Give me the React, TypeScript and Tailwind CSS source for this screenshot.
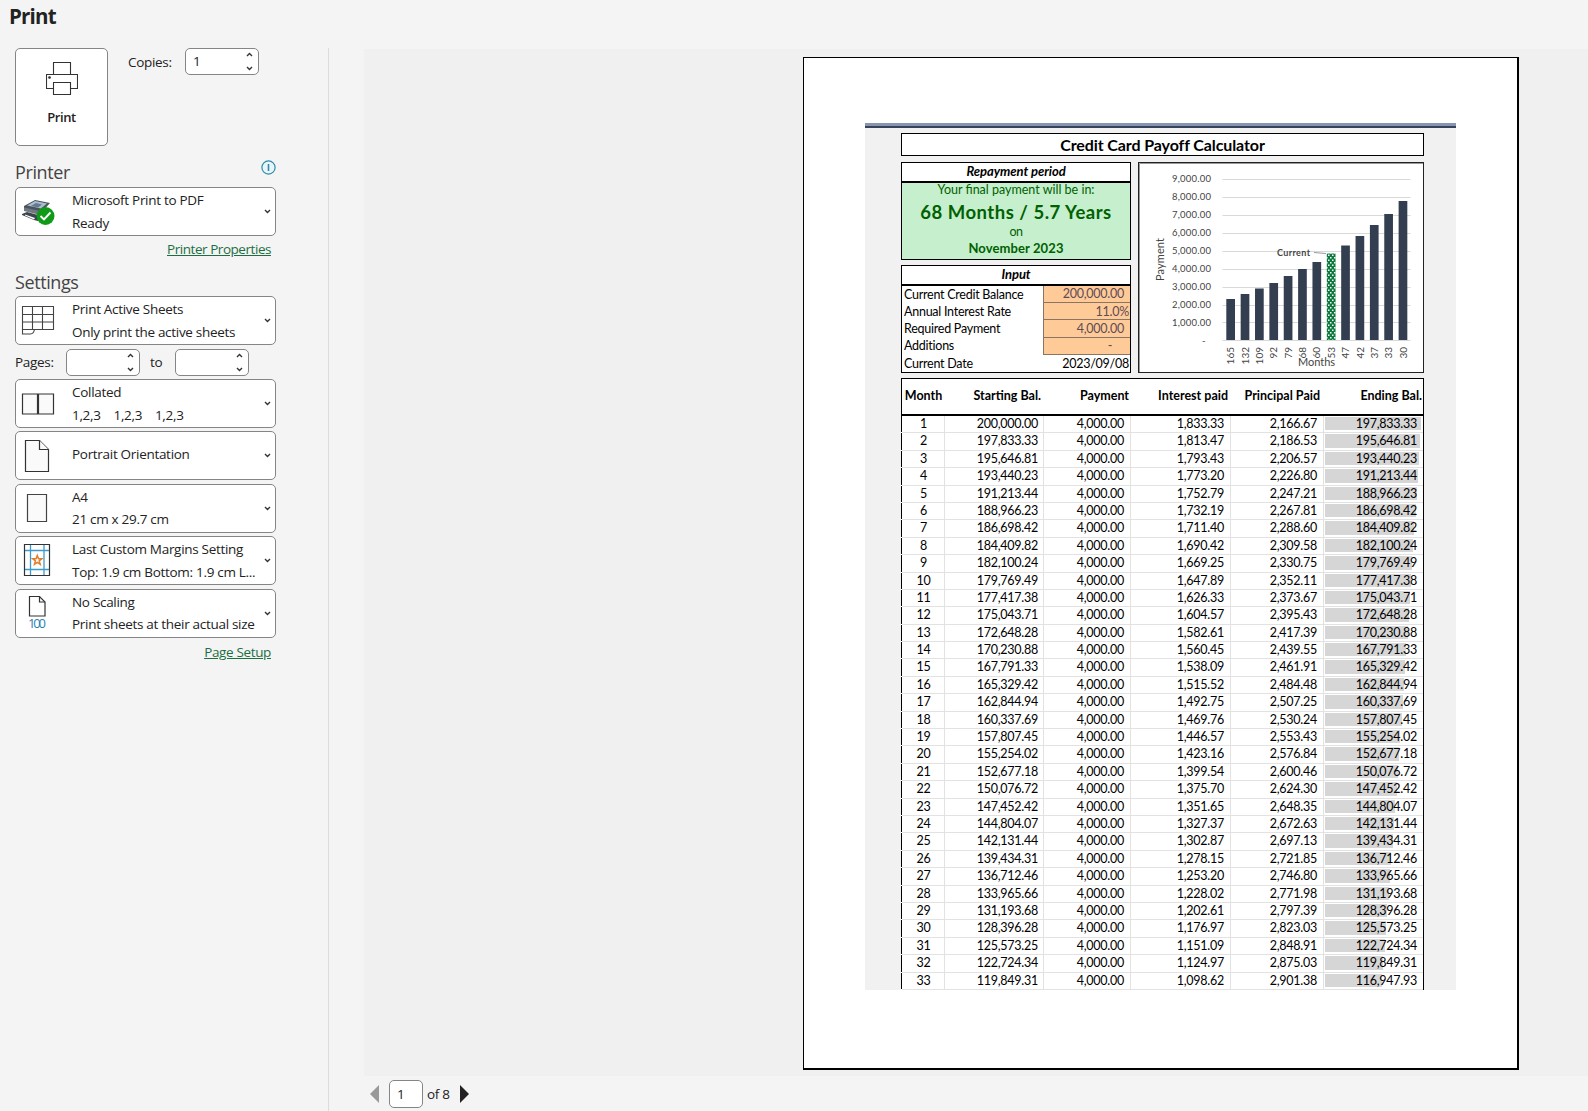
import type { ReactNode } from "react";

const PAYMENT = 4000;
const RATE = 0.11;

const money = (n: number) =>
  n.toLocaleString("en-US", { minimumFractionDigits: 2, maximumFractionDigits: 2 });

const buildSchedule = (balance: number, months: number) => {
  const rows = [];
  let start = balance;
  for (let month = 1; month <= months; month++) {
    const interest = (start * RATE) / 12;
    const principal = PAYMENT - interest;
    const end = start - principal;
    rows.push({ month, start, interest, principal, end });
    start = end;
  }
  return rows;
};

const schedule = buildSchedule(200000, 33);

const chartBars = [
  { months: "165", top: 137 },
  { months: "132", top: 132 },
  { months: "109", top: 126.5 },
  { months: "92", top: 121 },
  { months: "79", top: 114 },
  { months: "68", top: 107 },
  { months: "60", top: 100 },
  { months: "53", top: 91.5 },
  { months: "47", top: 83.5 },
  { months: "42", top: 74 },
  { months: "37", top: 63 },
  { months: "33", top: 52 },
  { months: "30", top: 39 },
];

const axisLabels = [
  "9,000.00", "8,000.00", "7,000.00", "6,000.00", "5,000.00",
  "4,000.00", "3,000.00", "2,000.00", "1,000.00",
];

function Chevron({ up = false }: { up?: boolean }) {
  return (
    <svg width="7" height="5" viewBox="0 0 7 5" fill="none" stroke="#333" strokeWidth="1.4">
      <path d={up ? "M1 4 3.5 1.5 6 4" : "M1 1 3.5 3.5 6 1"} />
    </svg>
  );
}

function NumberBox({ value = "" }: { value?: string }) {
  return (
    <div className="flex h-[27px] w-[74px] items-center justify-between rounded-[5px] border border-[#858585] bg-white pl-[7px] pr-[5px]">
      <span>{value}</span>
      <span className="flex flex-col gap-[9px]">
        <Chevron up />
        <Chevron />
      </span>
    </div>
  );
}

function Dropdown({ icon, title, detail }: { icon: ReactNode; title: string; detail?: string }) {
  return (
    <button
      type="button"
      className="flex h-[49px] w-[261px] shrink-0 items-center rounded-[5px] border border-[#858585] bg-white text-left"
    >
      <span className="flex w-[56px] shrink-0 pl-[4px]">{icon}</span>
      <span className={`flex w-[192px] shrink-0 flex-col whitespace-pre leading-[22.5px] ${detail ? "" : "pb-[3px]"}`}>
        <span>{title}</span>
        {detail && <span>{detail}</span>}
      </span>
      <Chevron />
    </button>
  );
}

function PrintIcon() {
  return (
    <svg width="32" height="33" viewBox="0 0 32 33" fill="#fff" stroke="#333" strokeWidth="1.1">
      <path d="M7.5 12.5V.5h17v12" />
      <path d="M7 26.500H.5v-14h31v14H25" />
      <path d="M7.500 20.500h17v12h-17z" />
      <circle cx="3.500" cy="15.500" r=".8" fill="#222" />
    </svg>
  );
}

function PrinterReadyIcon() {
  return (
    <svg width="36" height="30" viewBox="0 0 36 30">
      <path d="M4 9 15 3l15 3-9 10-17-4z" fill="#4b535e" />
      <path d="M7 8.500 15 4l12 2.500-6 5z" fill="#a9bdd0" />
      <path d="m11 9 5-3 6 1.500-4 3z" fill="#66788e" />
      <path d="M4 10.500 20 14v4L4 14z" fill="#6f7883" />
      <path d="m2 17 5-2 11 3v6l-4-1-12-5z" fill="#3d444c" />
      <path d="m5 17.500 10 3.500-1 1.500-9-4z" fill="#fff" />
      <circle cx="25.500" cy="19" r="9" fill="#119a18" />
      <path d="m20.500 19 3.500 3.500 6.500-7" fill="none" stroke="#fff" strokeWidth="1.900" />
    </svg>
  );
}

function SheetsIcon() {
  return (
    <svg width="36" height="32" viewBox="0 0 36 32" fill="none" stroke="#444" strokeWidth="1.1">
      <path d="M2.500 1.500h31v23h-31zM2.500 9.500h31M2.500 17h31M12.500 1.500v23M22.500 1.500v23" />
      <path d="M2.500 24.500v4.500h8q3 0 4-4.500" />
    </svg>
  );
}

function CollatedIcon() {
  return (
    <svg width="36" height="22" viewBox="0 0 36 22" fill="#fafafa" stroke="#333" strokeWidth="1.200">
      <path d="M2.500 1h15v20h-15zM18.500 1h15v20h-15z" />
    </svg>
  );
}

function PortraitIcon() {
  return (
    <svg width="36" height="34" viewBox="0 0 36 34" fill="#fafafa" stroke="#333" strokeWidth="1.200">
      <path d="M5.500 1.500h14l9 9v22h-23z" />
      <path d="M19.500 1.500v9h9" />
    </svg>
  );
}

function PaperIcon() {
  return (
    <svg width="36" height="30" viewBox="0 0 36 30" fill="#fafafa" stroke="#444" strokeWidth="1.200">
      <path d="M7.500 1.500h19v27h-19z" />
    </svg>
  );
}

function MarginsIcon() {
  return (
    <svg width="36" height="36" viewBox="0 0 36 36" fill="none" strokeWidth="1.200">
      <path d="M4.500 1.500h25v31h-25z" fill="#fff" stroke="#333" />
      <path d="M10.500 2v30M24 2v30M5 7.500h24M5 26.500h24" stroke="#3d9bcb" strokeWidth="1.300" />
      <path d="m17.300 12.500 1.200 3.200 3.400.1-2.700 2.100 1 3.300-2.900-1.900-2.800 1.900.9-3.300-2.700-2.100 3.400-.1z" stroke="#e0802c" strokeWidth="1.500" />
    </svg>
  );
}

function ScalingIcon() {
  return (
    <svg width="36" height="36" viewBox="0 0 36 36">
      <path d="M9.500 1.500h10l5.500 5.500v14h-15.500z" fill="#fff" stroke="#333" strokeWidth="1.200" />
      <path d="M19.500 1.500v5.500h5.500" fill="none" stroke="#333" strokeWidth="1.200" />
      <text x="8" y="32.500" textLength="18" fontSize="13" fill="#2e7fae" className="tracking-normal">100</text>
    </svg>
  );
}

function Sidebar() {
  return (
    <aside className="flex w-[329px] shrink-0 flex-col">
      <h1 className="h-[48px] pl-[9px] text-[20.500px] font-bold leading-[33px] tracking-[-0.800px] text-[#222]">Print</h1>
      <div className="flex flex-1 flex-col border-r border-[#dcdcdc] pl-[15px]">
        <div className="flex">
          <button type="button" className="flex h-[98px] w-[93px] flex-col items-center rounded-[5px] border border-[#858585] bg-white pt-[13px]">
            <PrintIcon />
            <span className="mt-[11px] text-[13px] font-semibold leading-[22px] tracking-[-0.400px]">Print</span>
          </button>
          <span className="ml-[20px] w-[57px] leading-[29px]">Copies:</span>
          <NumberBox value="1" />
        </div>

        <div className="mt-[14px] flex h-[27px] w-[261px] justify-between">
          <h2 className="text-[18px] leading-[24px] tracking-[-0.400px] text-[#444]">Printer</h2>
          <svg width="15" height="15" viewBox="0 0 15 15" fill="none" stroke="#2f8bab" strokeWidth="1.200">
            <circle cx="7.500" cy="7.500" r="6.600" fill="#eaf5f9" />
            <path d="M7.500 4v7" strokeWidth="1.600" />
          </svg>
        </div>
        <Dropdown icon={<PrinterReadyIcon />} title="Microsoft Print to PDF" detail="Ready" />
        <a className="mt-[2px] w-[256px] text-right leading-[22px] tracking-[-0.450px] text-[#1c6f43] underline">Printer Properties</a>

        <h2 className="mt-[9px] h-[27px] text-[18px] leading-[26px] tracking-[-0.400px] text-[#444]">Settings</h2>
        <Dropdown icon={<SheetsIcon />} title="Print Active Sheets" detail="Only print the active sheets" />
        <div className="my-[4px] flex h-[27px] items-center">
          <span className="w-[51px]">Pages:</span>
          <NumberBox />
          <span className="w-[35px] pl-[10px]">to</span>
          <NumberBox />
        </div>
        <div className="-mt-px flex flex-col gap-[3.400px]">
          <Dropdown icon={<CollatedIcon />} title="Collated" detail="1,2,3    1,2,3    1,2,3" />
          <Dropdown icon={<PortraitIcon />} title="Portrait Orientation" />
          <Dropdown icon={<PaperIcon />} title="A4" detail="21 cm x 29.7 cm" />
          <Dropdown icon={<MarginsIcon />} title="Last Custom Margins Setting" detail="Top: 1.9 cm Bottom: 1.9 cm L..." />
          <Dropdown icon={<ScalingIcon />} title="No Scaling" detail="Print sheets at their actual size" />
        </div>
        <a className="mt-[3px] w-[256px] text-right leading-[22px] tracking-[-0.350px] text-[#1c6f43] underline">Page Setup</a>
      </div>
    </aside>
  );
}

function PaymentChart() {
  return (
    <svg width="286" height="211" viewBox="0 0 286 211" fontSize="9.500" fill="#444" className="font-['Lato',sans-serif] tracking-normal">
      <defs>
        <pattern id="dots" width="4" height="5" patternUnits="userSpaceOnUse">
          <rect width="4" height="5" fill="#0b7a3c" />
          <rect x="0" y="0" width="1.500" height="1.500" fill="#fff" />
          <rect x="2" y="2.500" width="1.500" height="1.500" fill="#fff" />
        </pattern>
      </defs>
      <rect x=".5" y=".5" width="285" height="210" fill="#fff" stroke="#222" />
      <path d="M1.500 210V1.500H285" fill="none" stroke="#999" />
      {axisLabels.map((label, i) => (
        <g key={label}>
          <path d={`M84.500 ${Math.round(17 + i * 17.93)}.5h188`} stroke="#d9d9d9" />
          <text x="34" y={20.300 + i * 17.93} textLength="39">{label}</text>
        </g>
      ))}
      <path d="M84.500 178.500h188" stroke="#d9d9d9" />
      <text x="64" y="182">-</text>
      {chartBars.map((bar, i) => {
        const x = 88.300 + i * 14.360;
        return (
          <g key={bar.months}>
            <rect x={x} y={bar.top} width="8.700" height={178 - bar.top} fill={bar.months === "53" ? "url(#dots)" : "#333f50"} />
            <text transform={`translate(${x + 8} 185) rotate(-90)`} textAnchor="end" fontSize="10">{bar.months}</text>
          </g>
        );
      })}
      <path d="M176 90.500 188 91.500" stroke="#999" />
      <text x="139" y="94" textLength="33" fontSize="9" fontWeight="700">Current</text>
      <text transform="translate(26 119) rotate(-90)" textLength="43" fontSize="11">Payment</text>
      <text x="160" y="204" textLength="37" fontSize="11">Months</text>
    </svg>
  );
}

function BoxHeading({ children }: { children: ReactNode }) {
  return (
    <h3 className="h-[20px] shrink-0 border-b-2 border-black text-center text-[13px] font-bold italic leading-[17px] tracking-[-0.050px]">
      {children}
    </h3>
  );
}

function InputRow({ label, value, filled = true, flush = false }: { label: string; value: string; filled?: boolean; flush?: boolean }) {
  return (
    <div className="flex flex-1 items-center justify-between leading-[15.500px]">
      <span className="pl-[2px]">{label}</span>
      <span
        className={`flex h-full w-[87px] items-center justify-end whitespace-pre ${flush ? "pr-[1px]" : "pr-[6px]"} ${
          filled ? "border-b border-l border-[#8a7560] bg-[#fecb98] text-[#5f4a55]" : ""
        }`}
      >
        {value}
      </span>
    </div>
  );
}

const columns = "grid grid-cols-[43px_99px_87px_100px_93px_99px]";

function ScheduleTable() {
  return (
    <div className="mt-[5px] w-[523px]">
      <div className={`${columns} h-[38px] items-center whitespace-nowrap border border-b-2 border-black bg-white text-right font-bold tracking-normal`}>
        <span className="text-center">Month</span>
        <span className="pr-[3px]">Starting Bal.</span>
        <span className="pr-[2px]">Payment</span>
        <span className="pr-[3px]">Interest paid</span>
        <span className="pr-[4px]">Principal Paid</span>
        <span className="pr-[1px]">Ending Bal.</span>
      </div>
      <div className="flex h-[574px] flex-col border-r border-black bg-white">
        {schedule.map((row) => (
          <div key={row.month} className="flex flex-1">
            <div className="mb-px w-px bg-black" />
            <div className={`${columns} flex-1 border-b border-[#e2e2e2] text-right leading-[15px]`}>
              <span className="border-r border-[#e2e2e2] pl-px text-center">{row.month}</span>
              <span className="border-r border-[#e2e2e2] pr-[5px]">{money(row.start)}</span>
              <span className="border-r border-[#e2e2e2] pr-[6px]">{money(PAYMENT)}</span>
              <span className="border-r border-[#e2e2e2] pr-[6px]">{money(row.interest)}</span>
              <span className="border-r border-[#e2e2e2] pr-[6px]">{money(row.principal)}</span>
              <span className="relative pr-[6px]">
                <span
                  className="absolute bottom-[2px] left-[1px] top-[1px] bg-[#d6d6d6]"
                  style={{ width: (row.end / 197833.33) * 96 }}
                />
                <span className="relative">{money(row.end)}</span>
              </span>
            </div>
          </div>
        ))}
      </div>
    </div>
  );
}

function PrintedPage() {
  return (
    <div className="ml-[439px] mt-[8px] h-[1013px] w-[716px] border-b-2 border-l border-r-2 border-t border-black bg-white pl-[61px] pt-[65px] font-['Lato',sans-serif] text-[12.500px] tracking-[-0.250px] text-black">
      <div className="h-[867px] w-[591px] border-t-[3px] border-[#8496b0] bg-[#f1f1f1]">
        <div className="h-[2px] bg-[#38425a]" />
        <div className="pl-[36px] pt-[5px]">
          <h2 className="h-[23px] w-[523px] border border-black bg-white text-center text-[16px] font-bold leading-[22px] tracking-[-0.100px]">
            Credit Card Payoff Calculator
          </h2>
          <div className="mt-[6px] flex gap-[7px]">
            <div className="flex w-[230px] flex-col gap-[5px]">
              <div className="h-[98px] border border-black bg-[#c6efce] text-center tracking-normal text-[#006100]">
                <div className="bg-white text-black"><BoxHeading>Repayment period</BoxHeading></div>
                <p className="leading-[13px]">Your final payment will be in:</p>
                <p className="text-[18.500px] font-bold leading-[32px] tracking-[0.500px]">68 Months / 5.7 Years</p>
                <p className="leading-[8px] tracking-[-0.500px]">on</p>
                <p className="text-[13px] font-bold leading-[24px] tracking-[0.100px]">November 2023</p>
              </div>
              <div className="flex h-[108px] flex-col border border-black bg-white">
                <BoxHeading>Input</BoxHeading>
                <InputRow label="Current Credit Balance" value="200,000.00" />
                <InputRow label="Annual Interest Rate" value="11.0%" flush />
                <InputRow label="Required Payment" value="4,000.00" />
                <InputRow label="Additions" value="-    " />
                <InputRow label="Current Date" value="2023/09/08" filled={false} flush />
              </div>
            </div>
            <PaymentChart />
          </div>
          <ScheduleTable />
        </div>
      </div>
    </div>
  );
}

export default function App() {
  return (
    <div className="flex h-[1111px] w-[1588px] overflow-hidden bg-[#f4f4f4] font-['Open_Sans',sans-serif] text-[13.500px] tracking-[-0.300px] text-[#222]">
      <Sidebar />
      <main className="flex flex-1 flex-col pl-[35px] pt-[49px]">
        <div className="h-[1027px] bg-[#f0f0f0]">
          <PrintedPage />
        </div>
        <div className="flex items-center pl-[6px] pt-[4px]">
          <svg width="9" height="18" viewBox="0 0 9 18"><path d="M9 0v18L0 9z" fill="#999" /></svg>
          <span className="ml-[10px] flex h-[28px] w-[34px] items-center rounded-[5px] border border-[#858585] bg-white pl-[7px]">1</span>
          <span className="ml-[4px] w-[33px] whitespace-nowrap">of 8</span>
          <svg width="9" height="18" viewBox="0 0 9 18"><path d="M0 0v18l9-9z" fill="#222" /></svg>
        </div>
      </main>
    </div>
  );
}
